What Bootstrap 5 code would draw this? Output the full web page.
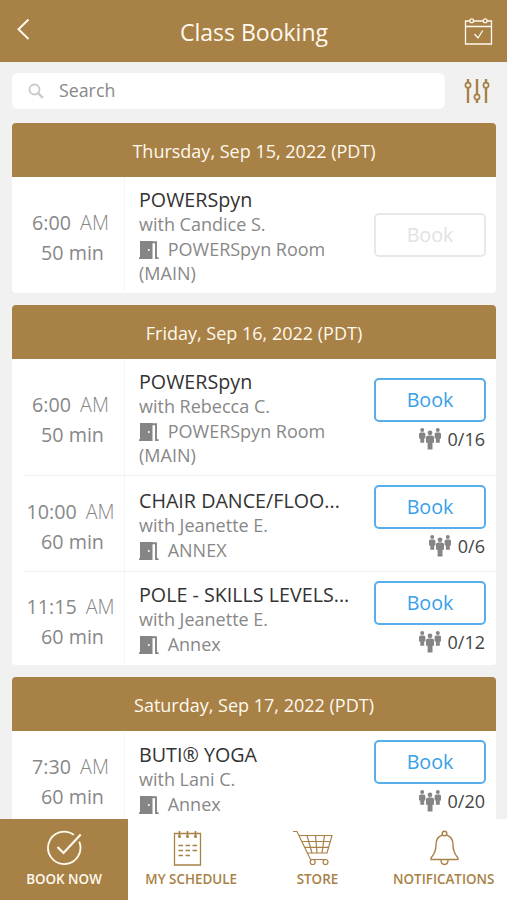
<!DOCTYPE html>
<html lang="en">
<head>
<meta charset="utf-8">
<meta name="viewport" content="width=device-width, initial-scale=1">
<title>Class Booking</title>
<link rel="stylesheet" href="https://cdn.jsdelivr.net/npm/bootstrap@5.3.0/dist/css/bootstrap.min.css">
<style>
:root { --gold: #a88146; --sky: #38a0e8; }
body { font-family: "Open Sans", "Noto Sans", sans-serif; background: #f1f1f1; color: #888; }
.app { height: 900px; }
.topbar { height: 62px; background: var(--gold); color: #fff9ee; padding: 2px 13px 0 16px; }
.topbar h1 { font-size: 23px; font-weight: 400; margin-right: 2px; padding-top: 1px; }
.side { width: 32px; }
.side .back { margin-bottom: 5px; }
.search-row { height: 61px; padding: 11px 17px 0 12px; }
.search-box { width: 433px; height: 36px; border-radius: 6px; font-size: 17.8px; padding: 0 0 1px 16px; }
.search-box span { margin-left: 15px; }
.day { margin: 0 11px 12px 12px; border-radius: 4px; }
.day-title { height: 54px; background: var(--gold); color: #fff9ee; font-size: 18px; padding-top: 2px; }
.slot { height: 96px; position: relative; }
.slot.tall { height: 116px; }
.slot.final { height: 94px; }
.slot + .slot::before { content: ""; position: absolute; top: 0; left: 12px; right: 0; height: 1px; background: #eef0f0; }
.when { width: 113px; border-right: 1px solid #f4f6f6; font-size: 19.7px; line-height: 30px; padding: 7px 0 0 5px; }
.tall .when { padding-top: 6px; }
.when .ampm { font-weight: 300; margin-left: 9px; }
.when .mins { padding-left: 4px; }
.what { padding: 14px 0 0 14px; width: 249px; font-size: 18px; line-height: 24.4px; }
.tall .what { padding-top: 11px; }
.final .what { padding-top: 12px; }
.what .name { font-size: 19.7px; color: #333; }
.what .room { width: 215px; }
.door { width: 20px; height: 19px; margin: 0 4px 0 0; vertical-align: -4px; }
.act { width: 112px; padding-top: 9px; }
.act.low { padding-top: 10px; }
.tall .act { padding-top: 19px; }
.tall .act.solo { padding-top: 36px; }
.btn-book { height: 44px; border: 2px solid #58aeea; border-radius: 5px; color: var(--sky); font-size: 19.7px; line-height: 1; padding: 0; background: #fff; }
.btn-book:disabled { border-color: #e8e8e8; color: #e2e2e2; opacity: 1; }
.seats { font-size: 18px; line-height: 24px; color: #444; margin-top: 5px; padding-right: 1px; }
.seats svg { margin-right: 7px; }
.tabs { height: 81px; background: #fff; font-size: 13.4px; font-weight: 600; }
.tabs a { color: var(--gold); padding-top: 11px; flex: 0 0 126.3px; line-height: 18px; }
.tabs a.on { background: var(--gold); color: #fff9ee; flex-basis: 128px; }
.tabs svg { width: 40px; height: 37px; margin-bottom: 3px; }
.tabs .cart { margin-right: 9px; }
</style>
<script src="https://cdn.jsdelivr.net/npm/bootstrap@5.3.0/dist/js/bootstrap.bundle.min.js"></script>
</head>
<body>
<svg class="d-none">
  <symbol id="door" viewBox="0 0 20 19">
    <path fill="#858585" d="M1 0H13.500V18H0v-1.800h1z"/>
    <path fill="none" stroke="#858585" stroke-width="1.900" d="M13 1.300h4v15.800h2.600"/>
    <circle cx="9.800" cy="9" r="1" fill="#fff"/>
  </symbol>
  <symbol id="people" viewBox="0 0 22 22">
    <g fill="#858585">
      <g id="person"><circle cx="3.200" cy="2" r="2"/><path d="M1.600 4.500h3.200Q6.400 4.500 6.400 6v4.600H5.200v4.200H1.300v-4.200H0V6q0-1.500 1.600-1.500z"/></g>
      <use href="#person" x="15.600"/>
      <circle cx="11" cy="4.800" r="2.400"/><path d="M9.200 7.600h3.600q2.200 0 2.200 2v5.200h-1.500V21.600H8.600V14.800H7V9.600q0-2 2.200-2z"/>
    </g>
  </symbol>
</svg>
<div class="app d-flex flex-column overflow-hidden">
  <header class="topbar d-flex align-items-center justify-content-between flex-shrink-0">
    <div class="side"><svg class="back d-block" width="16" height="24" viewBox="0 0 16 24" fill="none" stroke="#fff9ee" stroke-width="2"><path d="M12.500 1.500L2.500 11.300 12.500 21"/></svg></div>
    <h1 class="mb-0">Class Booking</h1>
    <div class="side"><svg class="d-block" width="32" height="30" viewBox="0 0 32 30" fill="none" stroke="#fff9ee" stroke-width="1.300"><path d="M8 4H3.500V27H29.500V4H25M11.500 4h10M3.500 9.500h26"/><circle cx="9.700" cy="3.800" r="1.900"/><circle cx="23.200" cy="3.800" r="1.900"/><path d="M12.500 17l3.500 4 4.800-7.500"/></svg></div>
  </header>
  <div class="search-row d-flex align-items-start justify-content-between flex-shrink-0">
    <div class="search-box bg-white d-flex align-items-center">
      <svg width="16" height="16" viewBox="0 0 16 16" fill="none" stroke="#cbcbcb"><circle cx="6.500" cy="6.500" r="5" stroke-width="1.800"/><path d="M10.300 10.300l4.500 4.500" stroke-width="2.600"/></svg>
      <span>Search</span>
    </div>
    <svg class="mt-1" width="26" height="28" viewBox="0 0 26 28" fill="#f1f1f1" stroke="#a88146" stroke-width="2.400"><path d="M4 2v24M13 2v24M22 2v24"/><g stroke-width="1.700"><circle cx="4" cy="8.200" r="2.600"/><circle cx="13" cy="20" r="2.600"/><circle cx="22" cy="8.200" r="2.600"/></g></svg>
  </div>

  <main class="flex-grow-1 overflow-hidden">
    <section class="day bg-white overflow-hidden">
      <div class="day-title d-flex align-items-center justify-content-center">Thursday, Sep 15, 2022 (PDT)</div>
      <div class="slot tall d-flex">
        <div class="when d-flex flex-column justify-content-center align-items-center"><div>6:00<span class="ampm">AM</span></div><div class="mins">50 min</div></div>
        <div class="what"><div class="name text-nowrap">POWERSpyn</div><div>with Candice S.</div><div class="room"><svg class="door"><use href="#door"/></svg> POWERSpyn Room (MAIN)</div></div>
        <div class="act solo"><button class="btn btn-book w-100" disabled>Book</button></div>
      </div>
    </section>

    <section class="day bg-white overflow-hidden">
      <div class="day-title d-flex align-items-center justify-content-center">Friday, Sep 16, 2022 (PDT)</div>
      <div class="slot tall d-flex">
        <div class="when d-flex flex-column justify-content-center align-items-center"><div>6:00<span class="ampm">AM</span></div><div class="mins">50 min</div></div>
        <div class="what"><div class="name text-nowrap">POWERSpyn</div><div>with Rebecca C.</div><div class="room"><svg class="door"><use href="#door"/></svg> POWERSpyn Room (MAIN)</div></div>
        <div class="act"><button class="btn btn-book w-100">Book</button><div class="seats d-flex justify-content-end align-items-center"><svg width="22" height="22"><use href="#people"/></svg>0/16</div></div>
      </div>
      <div class="slot d-flex">
        <div class="when d-flex flex-column justify-content-center align-items-center"><div>10:00<span class="ampm">AM</span></div><div class="mins">60 min</div></div>
        <div class="what"><div class="name text-nowrap">CHAIR DANCE/FLOO...</div><div>with Jeanette E.</div><div class="room"><svg class="door"><use href="#door"/></svg> ANNEX</div></div>
        <div class="act low"><button class="btn btn-book w-100">Book</button><div class="seats d-flex justify-content-end align-items-center"><svg width="22" height="22"><use href="#people"/></svg>0/6</div></div>
      </div>
      <div class="slot final d-flex">
        <div class="when d-flex flex-column justify-content-center align-items-center"><div>11:15<span class="ampm">AM</span></div><div class="mins">60 min</div></div>
        <div class="what"><div class="name text-nowrap">POLE - SKILLS LEVELS...</div><div>with Jeanette E.</div><div class="room"><svg class="door"><use href="#door"/></svg> Annex</div></div>
        <div class="act low"><button class="btn btn-book w-100">Book</button><div class="seats d-flex justify-content-end align-items-center"><svg width="22" height="22"><use href="#people"/></svg>0/12</div></div>
      </div>
    </section>

    <section class="day bg-white overflow-hidden">
      <div class="day-title d-flex align-items-center justify-content-center">Saturday, Sep 17, 2022 (PDT)</div>
      <div class="slot final d-flex">
        <div class="when d-flex flex-column justify-content-center align-items-center"><div>7:30<span class="ampm">AM</span></div><div class="mins">60 min</div></div>
        <div class="what"><div class="name text-nowrap">BUTI® YOGA</div><div>with Lani C.</div><div class="room"><svg class="door"><use href="#door"/></svg> Annex</div></div>
        <div class="act"><button class="btn btn-book w-100">Book</button><div class="seats d-flex justify-content-end align-items-center"><svg width="22" height="22"><use href="#people"/></svg>0/20</div></div>
      </div>
    </section>
  </main>

  <nav class="tabs d-flex flex-shrink-0">
    <a href="#" class="on d-flex flex-column align-items-center text-decoration-none"><svg viewBox="0 0 40 37" fill="none" stroke="#fff9ee" stroke-width="1.800"><path d="M35.200 11.600A16.200 16.200 0 1 1 30 4.900"/><path stroke-width="2.200" d="M13.500 17l6 6L36.700 4.500"/></svg><span>BOOK NOW</span></a>
    <a href="#" class="d-flex flex-column align-items-center text-decoration-none"><svg viewBox="0 0 40 37" fill="none" stroke="#a88146" stroke-width="1.300"><path d="M3.500 3.500H29.500V35H3.500z"/><path stroke-width="1.600" d="M8.500 1v5.500M16.500 1v5.500M24.500 1v5.500"/><circle cx="8.500" cy="6.500" r=".9"/><circle cx="16.500" cy="6.500" r=".9"/><circle cx="24.500" cy="6.500" r=".9"/><path stroke-width="1.500" stroke-dasharray="4.500 2.500" d="M7.500 15.500h19M7.500 20.500h19M7.500 25.500h12"/></svg><span>MY SCHEDULE</span></a>
    <a href="#" class="d-flex flex-column align-items-center text-decoration-none"><svg class="cart" viewBox="0 0 40 37" fill="none" stroke="#a88146" stroke-width="1.200"><path d="M0 1.500H4L17.500 29.500H33M6 5.500H39L34 23H14.500M8.500 11.500H37.500M11.500 17.300H35.500M14 5.500l5 17.500M22.500 5.500l1.500 17.500M31.500 5.500L29 23"/><circle cx="19.700" cy="32" r="2.500"/><circle cx="32.500" cy="32" r="2.500"/></svg><span>STORE</span></a>
    <a href="#" class="d-flex flex-column align-items-center text-decoration-none"><svg viewBox="0 0 40 37" fill="none" stroke="#a88146" stroke-width="1.400"><circle cx="20.500" cy="3.500" r="2.300"/><path d="M18.500 5C13 6.500 12 10.500 12 15c0 6.500-2 9.500-5 13v1.500h27V28C31 24.500 29 21.500 29 15c0-4.500-1-8.500-6.500-10M17 30c0 6 7 6 7 0"/></svg><span>NOTIFICATIONS</span></a>
  </nav>
</div>
</body>
</html>
